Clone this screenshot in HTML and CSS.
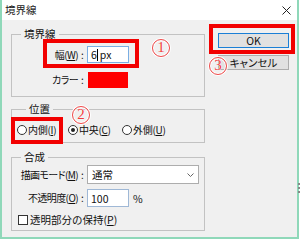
FILE: index.html
```html
<!DOCTYPE html>
<html lang="ja">
<head>
<meta charset="utf-8">
<title>境界線</title>
<link rel="stylesheet" href="styles.css">
</head>
<body>
<div class="window">
  <div class="titlebar">
    <span class="title">境界線</span>
    <svg class="close" width="9" height="9" viewBox="0 0 9 9"><path d="M0.5 0.5L8.5 8.5M8.5 0.5L0.5 8.5" stroke="#222" stroke-width="1" fill="none"/></svg>
  </div>
  <div class="content">
    <div class="left">
      <fieldset class="group g1">
        <legend>境界線</legend>
        <div class="row r-width">
          <span class="lbl">幅(<u>W</u>)<span class="colon">:</span></span>
          <div class="edit"><span>6</span><span class="caret"></span><span class="unit">px</span></div>
        </div>
        <div class="row r-color">
          <span class="lbl">カラー<span class="colon">:</span></span>
          <div class="swatch"></div>
        </div>
      </fieldset>
      <fieldset class="group g2">
        <legend>位置</legend>
        <div class="radios">
          <div class="opt o1"><span class="radio"></span><span class="otext">内側(<u>I</u>)</span></div>
          <div class="opt o2"><span class="radio checked"></span><span class="otext">中央(<u>C</u>)</span></div>
          <div class="opt o3"><span class="radio"></span><span class="otext">外側(<u>U</u>)</span></div>
        </div>
      </fieldset>
      <fieldset class="group g3">
        <legend>合成</legend>
        <div class="row r-mode">
          <span class="lbl">描画モード(<u>M</u>)<span class="colon">:</span></span>
          <div class="select"><span>通常</span><svg width="7" height="4" viewBox="0 0 7 4"><path d="M0.5 0.5L3.5 3.5L6.5 0.5" stroke="#666" stroke-width="1" fill="none"/></svg></div>
        </div>
        <div class="row r-opacity">
          <span class="lbl">不透明度(<u>O</u>)<span class="colon">:</span></span>
          <div class="edit e2"><span>100</span></div>
          <span class="pct">%</span>
        </div>
        <div class="row r-check">
          <span class="check"></span><span>透明部分の保持(<u>P</u>)</span>
        </div>
      </fieldset>
    </div>
    <div class="right">
      <button class="btn default">OK</button>
      <button class="btn">キャンセル</button>
    </div>
  </div>
  <div class="mark m1"></div>
  <div class="mark m2"></div>
  <div class="mark m3"></div>
  <span class="num n1">1</span>
  <span class="num n2">2</span>
  <span class="num n3">3</span>
  <div class="grip"></div>
</div>
</body>
</html>
```

FILE: styles.css
```css
* { box-sizing: border-box; }
html, body { margin: 0; padding: 0; background: #fff; }
body {
  font-family: "Noto Sans CJK JP", "Noto Sans", sans-serif;
  font-size: 10.5px;
  color: #111;
}
u { text-decoration: underline; text-underline-offset: 1px; }

.window {
  position: relative;
  width: 299px;
  height: 239px;
  border: 2px solid #8fd8b9;
  border-top: 0;
  background: #f0f0f0;
  display: flex;
  flex-direction: column;
}
.titlebar {
  height: 20px;
  background: #fff;
  display: flex;
  align-items: center;
  justify-content: space-between;
  padding: 0 6px 0 3px;
  flex: none;
}
.title { line-height: 14px; color: #222; }

.content {
  display: flex;
  align-items: flex-start;
  padding: 7px 0 0 9px;
}
.left { width: 194px; display: flex; flex-direction: column; flex: none; }

.group {
  margin: 0;
  padding: 0;
  border: 1px solid #c2c2c2;
  min-width: 0;
}
.group legend {
  margin-left: 9px;
  padding: 0 3px;
  line-height: 14px;
}
.g1 { padding: 5px 0 8px; }
.g2 { margin-top: 5px; padding: 7px 0 5px 5px; }
.g3 { margin-top: 7px; padding: 1px 0 3px; }

.row { display: flex; align-items: center; }
.lbl {
  width: 75px;
  display: flex;
  justify-content: flex-end;
  white-space: nowrap;
  line-height: 14px;
  font-size: 10px;
  letter-spacing: -0.6px;
  font-feature-settings: "palt";
}
.colon { width: 9px; text-align: center; letter-spacing: 0; }
.r-color { margin-top: 9px; }

.edit {
  width: 42px;
  height: 17px;
  background: #fff;
  border: 1px solid #7aaee3;
  display: flex;
  align-items: center;
  padding-left: 3px;
  line-height: 13px;
}
.caret { width: 1px; height: 12px; background: #000; margin: 0 1px 0 0; }
.unit { margin-left: 1px; }
.swatch { width: 40px; height: 16px; background: #ff0000; margin-left: 1px; }

.radios { display: flex; align-items: center; height: 14px; }
.opt { display: flex; align-items: center; gap: 1px; line-height: 14px; }
.otext { font-size: 10px; letter-spacing: -0.3px; }
.o1 { width: 51px; }
.o2 { width: 54px; }
.radio {
  width: 10px; height: 10px;
  border: 1px solid #333;
  border-radius: 50%;
  background: #fff;
  display: flex; align-items: center; justify-content: center;
}
.radio.checked::after {
  content: "";
  width: 4px; height: 4px;
  border-radius: 50%;
  background: #222;
}

.select {
  width: 112px;
  height: 19px;
  background: #fff;
  border: 1px solid #adadad;
  display: flex;
  align-items: center;
  justify-content: space-between;
  padding: 0 4px 0 4px;
}
.r-opacity { margin-top: 5px; }
.e2 { height: 18px; border-color: #9fb8d6; }
.pct { margin-left: 4px; }
.r-check { margin-top: 6px; padding-left: 6px; height: 14px; gap: 2px; line-height: 14px; }
.check { width: 10px; height: 10px; border: 1px solid #333; background: #fff; }

.right {
  margin: 6px 0 0 13px;
  display: flex;
  flex-direction: column;
  gap: 7px;
}
.btn {
  width: 71px;
  height: 15px;
  padding: 0;
  background: #e1e1e1;
  border: 1px solid #adadad;
  font-family: inherit;
  font-size: 10.5px;
  line-height: 12px;
  color: #111;
  font-feature-settings: "palt";
}
.btn.default { border-color: #1a7fd6; }

.mark {
  position: absolute;
  border: 4px solid #f20000;
}
.m1 { left: 41px; top: 39px; width: 96px; height: 29px; }
.m2 { left: 9px; top: 117px; width: 52px; height: 27px; }
.m3 { left: 207px; top: 24px; width: 86px; height: 30px; }

.num {
  position: absolute;
  width: 18px;
  height: 18px;
  border: 1.5px solid #f04a4a;
  border-radius: 50%;
  box-shadow: 0 0 0 1px #fff, inset 0 0 0 1px #fff;
  color: #f03c3c;
  font-family: "Liberation Serif", serif;
  font-size: 15px;
  line-height: 15px;
  text-align: center;
  text-shadow: 0 0 1px #fff, 0 0 1px #fff;
}
.n1 { left: 150px; top: 39px; }
.n2 { left: 70px; top: 106px; }
.n3 { left: 207px; top: 57px; }

.grip {
  position: absolute;
  right: -3px;
  top: 183px;
  width: 2px;
  height: 12px;
  background: repeating-linear-gradient(#888 0 2px, transparent 2px 4px);
}
```
